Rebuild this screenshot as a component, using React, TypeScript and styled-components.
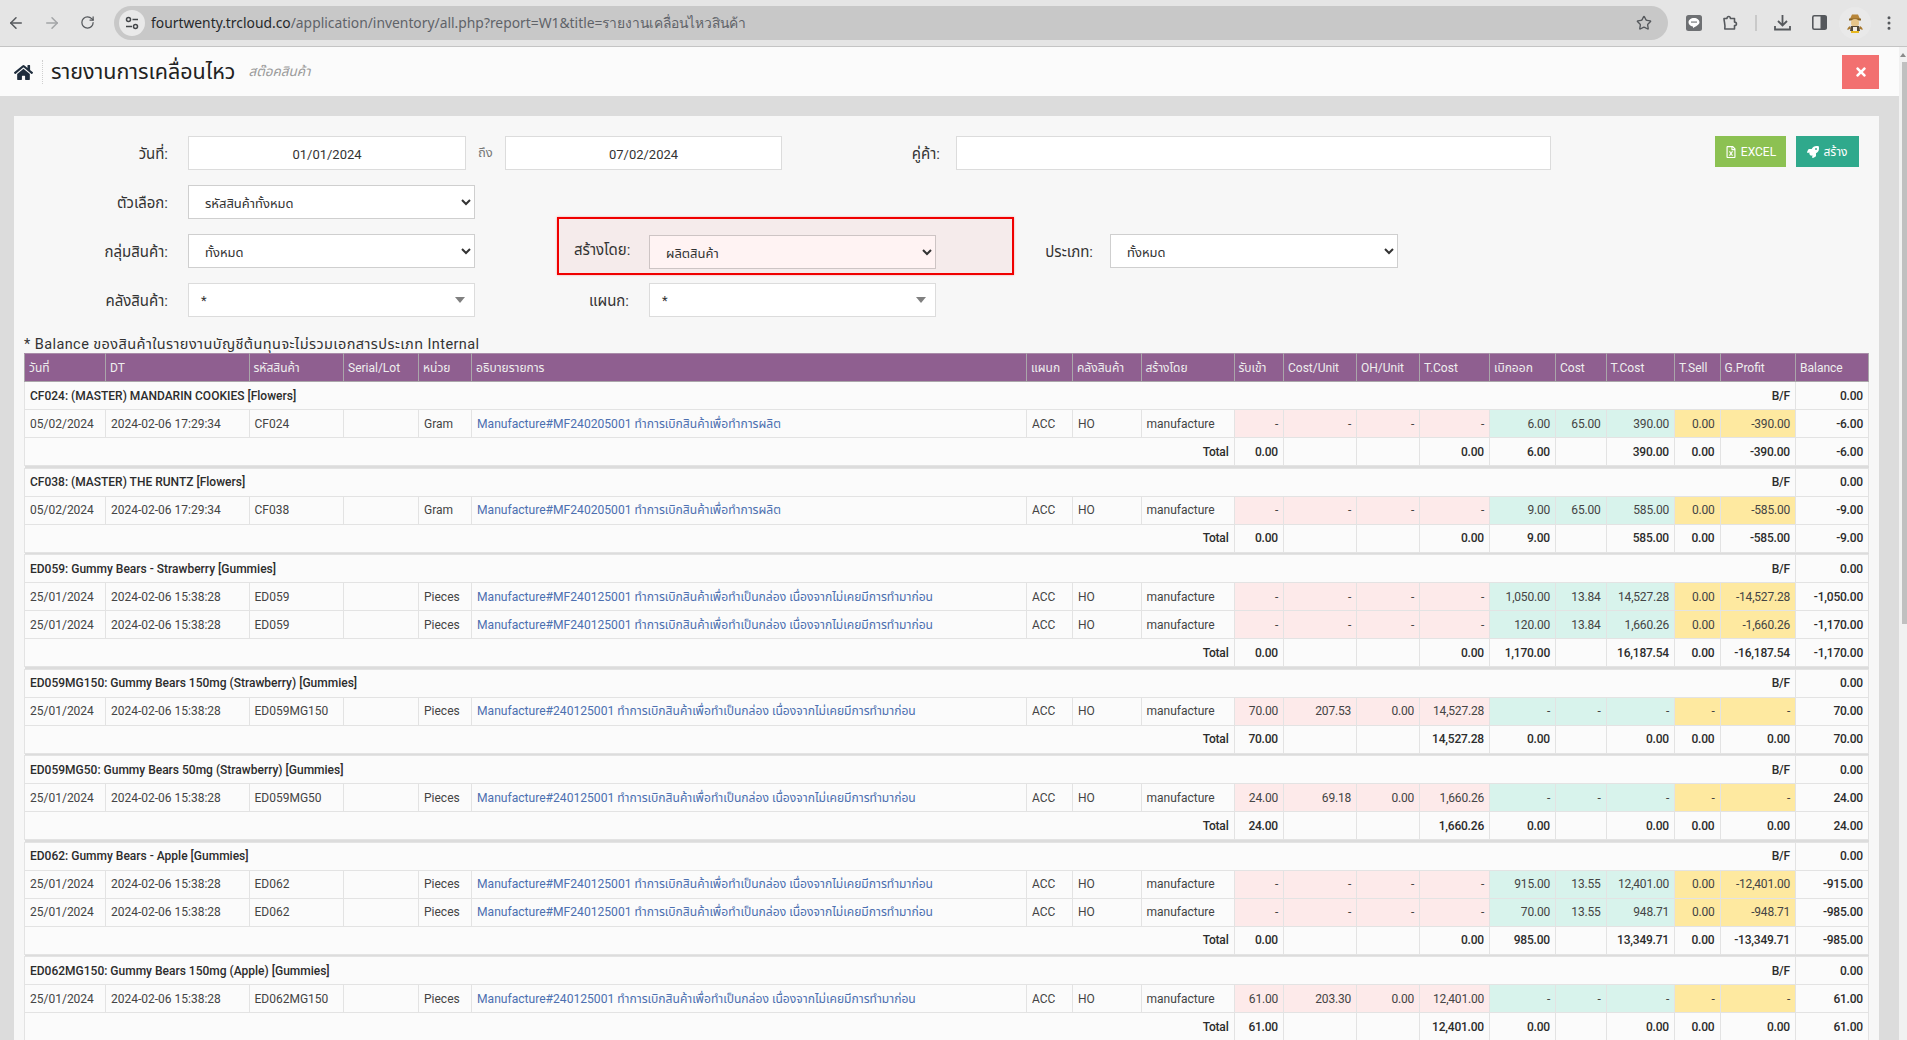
import styled, { createGlobalStyle } from 'styled-components';
import { ArrowLeft, ArrowRight, RotateCw, Star, EllipsisVertical } from 'lucide-react';
import { FaHome, FaTimes, FaRegFileExcel, FaRocket } from 'react-icons/fa';

const FONT = `Roboto, "Noto Sans", "Noto Sans Thai", "Noto Sans CJK SC", sans-serif`;

const GlobalStyle = createGlobalStyle`
	html, body {
		margin: 0;
		height: 100%;
		overflow: hidden;
	}
	body {
		font-family: ${FONT};
		color: #333;
		background: #dcdcdc;
	}
`;

const Shell = styled.div`
	height: 1040px;
	display: flex;
	flex-direction: column;
`;

const Toolbar = styled.div`
	height: 47px;
	box-sizing: border-box;
	flex: none;
	display: flex;
	align-items: center;
	background: #e5e5e5;
	border-bottom: 1px solid #c4c4c4;
	padding-bottom: 1px;
	color: #55585c;
`;

const NavButton = styled.button<{ $dim?: boolean }>`
	width: 34px;
	height: 34px;
	margin-right: 1.5px;
	padding: 0;
	border: 0;
	background: none;
	display: flex;
	align-items: center;
	justify-content: center;
	color: ${({ $dim }) => ($dim ? '#a3a5a7' : '#55585c')};
`;

const NavGroup = styled.div`
	display: flex;
	width: 114px;
	margin-left: -1px;
	margin-right: 1px;
`;

const AddressBar = styled.div`
	width: 1554px;
	height: 34px;
	flex: none;
	border-radius: 17px;
	background: #c8c8c8;
	display: flex;
	align-items: center;
	padding: 0 16px 0 5px;
	box-sizing: border-box;
	font-family: "Noto Sans", sans-serif;
	font-size: 13.85px;
`;

const TuneChip = styled.span`
	width: 26px;
	height: 26px;
	border-radius: 50%;
	background: #e9e9e9;
	display: flex;
	align-items: center;
	justify-content: center;
	margin-right: 6px;
`;

const Url = styled.span`
	flex: 1;
	color: #5f6368;
	white-space: nowrap;
	b {
		font-weight: 400;
		color: #26282b;
	}
`;

const ToolIcons = styled.div`
	display: flex;
	align-items: center;
	flex: 1;
	padding-left: 16px;
`;

const ToolIcon = styled.span<{ $gap?: number }>`
	display: flex;
	width: 20px;
	height: 20px;
	align-items: center;
	justify-content: center;
	margin-right: ${({ $gap }) => $gap ?? 16}px;
`;

const ToolDivider = styled.span`
	width: 2px;
	height: 16px;
	background: #c9c9c9;
	margin-right: 15px;
`;

const AvatarChip = styled.span`
	display: flex;
	width: 32px;
	height: 32px;
	margin: 0 9px 0 -6px;
	border-radius: 50%;
	background: #e9e9e9;
	align-items: center;
	justify-content: center;
`;

const Viewport = styled.div`
	flex: 1;
	min-height: 0;
	display: flex;
`;

const Page = styled.div`
	flex: 1;
	min-width: 0;
	overflow: hidden;
	display: flex;
	flex-direction: column;
`;

const ScrollTrack = styled.div`
	width: 8px;
	flex: none;
	background: #f1f1f1;
	display: flex;
	flex-direction: column;
	align-items: flex-end;
`;

const ScrollArrow = styled.span`
	width: 0;
	height: 0;
	margin: 6px 1px 5px 0;
	border-left: 3px solid transparent;
	border-right: 3px solid transparent;
	border-bottom: 4px solid #8a8a8a;
`;

const ScrollThumb = styled.div`
	width: 5px;
	height: 562px;
	background: #c0c0c0;
`;

const TitleBar = styled.header`
	height: 49px;
	flex: none;
	box-sizing: border-box;
	background: #fbfbfb;
	display: flex;
	align-items: center;
	padding: 1px 20px 0 14px;
`;

const HomeLink = styled.span`
	display: flex;
	width: 20px;
	color: #1f2d3d;
	font-size: 19px;
	padding-right: 8px;
	height: 24px;
	align-items: center;
	border-right: 1px dotted #cfcfcf;
	margin-right: 8px;
`;

const PageTitle = styled.h1`
	margin: 0;
	font-size: 21.5px;
	font-weight: 400;
	color: #222;
`;

const PageSub = styled.em`
	margin-left: 13px;
	font-size: 13.5px;
	color: #9a9a9a;
`;

const CloseButton = styled.button`
	margin-left: auto;
	width: 37px;
	height: 34px;
	border: 0;
	padding: 0;
	background: #f27070;
	color: #fff;
	font-size: 14px;
	display: flex;
	align-items: center;
	justify-content: center;
`;

const Body = styled.main`
	flex: 1;
	min-height: 0;
	padding: 20px 20px 0 14px;
`;

const Panel = styled.section`
	height: 100%;
	box-sizing: border-box;
	background: #f7f7f7;
	padding: 20px 11px 0 10px;
	overflow: hidden;
`;

const FormRow = styled.div`
	display: flex;
	align-items: center;
	height: 34px;
	margin-bottom: 15px;
`;

const Label = styled.label<{ $w: number; $pad?: number }>`
	flex: none;
	width: ${({ $w }) => $w}px;
	box-sizing: border-box;
	padding: 2px ${({ $pad }) => $pad ?? 20}px 0 0;
	text-align: right;
	font-size: 15px;
	color: #333;
`;

const ToWord = styled.span`
	flex: none;
	width: 39px;
	padding-left: 12px;
	box-sizing: border-box;
	font-size: 13px;
	color: #777;
`;

const field = `
	height: 34px;
	box-sizing: border-box;
	flex: none;
	border: 1px solid #dcdcdc;
	border-radius: 0;
	background: #fff;
	font-family: ${FONT};
	font-size: 13px;
	color: #333;
`;

const TextField = styled.input<{ $w: number; $center?: boolean }>`
	${field}
	width: ${({ $w }) => $w}px;
	padding-top: 3px;
	text-align: ${({ $center }) => ($center ? 'center' : 'left')};
`;

const SelectField = styled.select<{ $w: number; $tint?: boolean }>`
	${field}
	width: ${({ $w }) => $w}px;
	padding: 2px 0 0 12px;
	background: ${({ $tint }) => ($tint ? '#fff3f3' : '#fff')};
	border-color: ${({ $tint }) => ($tint ? '#cdc4c4' : '#cfcfcf')};
`;

const Select2 = styled.div<{ $w: number }>`
	${field}
	width: ${({ $w }) => $w}px;
	display: flex;
	align-items: center;
	justify-content: space-between;
	padding: 0 9px 0 12px;
	&::after {
		content: '';
		border-left: 5px solid transparent;
		border-right: 5px solid transparent;
		border-top: 6px solid #808080;
	}
`;

const Spacer = styled.div<{ $w: number }>`
	flex: none;
	width: ${({ $w }) => $w}px;
`;

const Actions = styled.div`
	margin-left: auto;
	margin-right: 9px;
	margin-top: -3px;
	display: flex;
	gap: 10px;
`;

const ActionButton = styled.button<{ $bg: string; $w: number }>`
	width: ${({ $w }) => $w}px;
	height: 31px;
	border: 0;
	padding: 0;
	background: ${({ $bg }) => $bg};
	color: #fff;
	font-family: ${FONT};
	font-size: 12px;
	display: flex;
	align-items: center;
	justify-content: center;
	gap: 4px;
`;

const Highlight = styled.div`
	flex: none;
	width: 457px;
	height: 58px;
	margin: -17px 0 -7px;
	padding: 16px 0 0 0;
	box-sizing: border-box;
	display: flex;
	align-items: flex-start;
	background: #f5ebeb;
	border: 2px solid #f00000;
	box-shadow: 0 0 2px rgba(255, 0, 0, 0.35);
`;

const HighlightLabel = styled.label`
	width: 90px;
	flex: none;
	box-sizing: border-box;
	padding: 4px 15px 0 15px;
	font-size: 15px;
	white-space: nowrap;
`;

const Note = styled.p`
	margin: 19px 0 0;
	height: 17px;
	line-height: 18px;
	font-size: 14.5px;
	letter-spacing: 0.42px;
	color: #333;
`;

const Sheet = styled.table`
	table-layout: fixed;
	width: 1844px;
	border-collapse: collapse;
	font-size: 12px;
	color: #444;
`;

const HeadCell = styled.th`
	height: 28px;
	box-sizing: border-box;
	padding: 0 0 0 4px;
	background: #8f5f90;
	border: 1.5px solid #aaa6aa;
	border-top-color: #a98ca9;
	color: #eee;
	font-weight: 400;
	text-align: left;
	white-space: nowrap;
	overflow: hidden;
`;

const Row = styled.tr`
	height: 28px;
	background: #fbfbfb;
`;

const Cell = styled.td<{ $tone?: 'in' | 'out' | 'sell'; $right?: boolean; $bold?: boolean }>`
	box-sizing: border-box;
	padding: 0 5px;
	border: 1px solid #e3e3e3;
	white-space: nowrap;
	overflow: hidden;
	text-align: ${({ $right }) => ($right ? 'right' : 'left')};
	font-weight: ${({ $bold }) => ($bold ? 500 : 400)};
	color: ${({ $bold }) => ($bold ? '#2c2c2c' : '#444')};
	letter-spacing: ${({ $right }) => ($right ? '-0.2px' : '0')};
	background: ${({ $tone }) =>
		$tone === 'in' ? '#fdeaea' : $tone === 'out' ? '#d8f3ec' : $tone === 'sell' ? '#fee9a0' : 'transparent'};
`;

const DocLink = styled.a`
	color: #4c6fb0;
	font-size: 12.1px;
	text-decoration: none;
`;

const GapRow = styled.tr`
	height: 1.5px;
	td {
		padding: 0;
		background: #dcdcdc;
		height: 1.5px;
		line-height: 0;
		font-size: 0;
		border: 0;
	}
`;

const COLUMNS: [string, number][] = [
	['วันที่', 81],
	['DT', 143.5],
	['รหัสสินค้า', 94.5],
	['Serial/Lot', 75],
	['หน่วย', 53],
	['อธิบายรายการ', 555],
	['แผนก', 46],
	['คลังสินค้า', 68.5],
	['สร้างโดย', 93],
	['รับเข้า', 49.5],
	['Cost/Unit', 73],
	['OH/Unit', 63],
	['T.Cost', 70],
	['เบิกออก', 66],
	['Cost', 50.5],
	['T.Cost', 68.5],
	['T.Sell', 45.5],
	['G.Profit', 75.5],
	['Balance', 73],
];

type Line = {
	date: string;
	dt: string;
	unit: string;
	doc: string;
	inn: string[];
	out: string[];
	balance: string;
};

type Group = {
	code: string;
	title: string;
	lines: Line[];
	total: string[];
};

const DASH4 = ['-', '-', '-', '-'];
const DASH5 = ['-', '-', '-', '-', '-'];
const MIX = 'ทำการเบิกสินค้าเพื่อทำเป็นกล่อง เนื่องจากไม่เคยมีการทำมาก่อน';
const MADE = 'ทำการเบิกสินค้าเพื่อทำการผลิต';
const FEB = '2024-02-06 17:29:34';
const JAN = '2024-02-06 15:38:28';

const GROUPS: Group[] = [
	{
		code: 'CF024',
		title: 'CF024: (MASTER) MANDARIN COOKIES [Flowers]',
		lines: [
			{ date: '05/02/2024', dt: FEB, unit: 'Gram', doc: `Manufacture#MF240205001 ${MADE}`, inn: DASH4, out: ['6.00', '65.00', '390.00', '0.00', '-390.00'], balance: '-6.00' },
		],
		total: ['0.00', '', '', '0.00', '6.00', '', '390.00', '0.00', '-390.00', '-6.00'],
	},
	{
		code: 'CF038',
		title: 'CF038: (MASTER) THE RUNTZ [Flowers]',
		lines: [
			{ date: '05/02/2024', dt: FEB, unit: 'Gram', doc: `Manufacture#MF240205001 ${MADE}`, inn: DASH4, out: ['9.00', '65.00', '585.00', '0.00', '-585.00'], balance: '-9.00' },
		],
		total: ['0.00', '', '', '0.00', '9.00', '', '585.00', '0.00', '-585.00', '-9.00'],
	},
	{
		code: 'ED059',
		title: 'ED059: Gummy Bears - Strawberry [Gummies]',
		lines: [
			{ date: '25/01/2024', dt: JAN, unit: 'Pieces', doc: `Manufacture#MF240125001 ${MIX}`, inn: DASH4, out: ['1,050.00', '13.84', '14,527.28', '0.00', '-14,527.28'], balance: '-1,050.00' },
			{ date: '25/01/2024', dt: JAN, unit: 'Pieces', doc: `Manufacture#MF240125001 ${MIX}`, inn: DASH4, out: ['120.00', '13.84', '1,660.26', '0.00', '-1,660.26'], balance: '-1,170.00' },
		],
		total: ['0.00', '', '', '0.00', '1,170.00', '', '16,187.54', '0.00', '-16,187.54', '-1,170.00'],
	},
	{
		code: 'ED059MG150',
		title: 'ED059MG150: Gummy Bears 150mg (Strawberry) [Gummies]',
		lines: [
			{ date: '25/01/2024', dt: JAN, unit: 'Pieces', doc: `Manufacture#240125001 ${MIX}`, inn: ['70.00', '207.53', '0.00', '14,527.28'], out: DASH5, balance: '70.00' },
		],
		total: ['70.00', '', '', '14,527.28', '0.00', '', '0.00', '0.00', '0.00', '70.00'],
	},
	{
		code: 'ED059MG50',
		title: 'ED059MG50: Gummy Bears 50mg (Strawberry) [Gummies]',
		lines: [
			{ date: '25/01/2024', dt: JAN, unit: 'Pieces', doc: `Manufacture#240125001 ${MIX}`, inn: ['24.00', '69.18', '0.00', '1,660.26'], out: DASH5, balance: '24.00' },
		],
		total: ['24.00', '', '', '1,660.26', '0.00', '', '0.00', '0.00', '0.00', '24.00'],
	},
	{
		code: 'ED062',
		title: 'ED062: Gummy Bears - Apple [Gummies]',
		lines: [
			{ date: '25/01/2024', dt: JAN, unit: 'Pieces', doc: `Manufacture#MF240125001 ${MIX}`, inn: DASH4, out: ['915.00', '13.55', '12,401.00', '0.00', '-12,401.00'], balance: '-915.00' },
			{ date: '25/01/2024', dt: JAN, unit: 'Pieces', doc: `Manufacture#MF240125001 ${MIX}`, inn: DASH4, out: ['70.00', '13.55', '948.71', '0.00', '-948.71'], balance: '-985.00' },
		],
		total: ['0.00', '', '', '0.00', '985.00', '', '13,349.71', '0.00', '-13,349.71', '-985.00'],
	},
	{
		code: 'ED062MG150',
		title: 'ED062MG150: Gummy Bears 150mg (Apple) [Gummies]',
		lines: [
			{ date: '25/01/2024', dt: JAN, unit: 'Pieces', doc: `Manufacture#240125001 ${MIX}`, inn: ['61.00', '203.30', '0.00', '12,401.00'], out: DASH5, balance: '61.00' },
		],
		total: ['61.00', '', '', '12,401.00', '0.00', '', '0.00', '0.00', '0.00', '61.00'],
	},
];

const TuneIcon = () => (
	<svg width="14" height="14" viewBox="0 0 14 14" fill="none" stroke="#44474a" strokeWidth="1.5">
		<circle cx="3.5" cy="3.5" r="2" />
		<path d="M7.5 3.5H13M1 10.5h6" />
		<circle cx="10.5" cy="10.5" r="2" />
	</svg>
);

const LineIcon = () => (
	<svg width="16" height="16" viewBox="0 0 16 16">
		<rect width="16" height="16" rx="2.5" fill="#6e7073" />
		<path d="M8 3c-3.1 0-5.5 1.9-5.5 4.3 0 2.1 1.8 3.8 4.3 4.2.4.1.3.6.2 1.2 0 .3.3.3.6.1 1.7-1.100 5.900-3 5.900-5.500C13.500 4.900 11.100 3 8 3z" fill="#fff" />
		<rect x="5" y="6.300" width="6" height="1.600" fill="#9b9d9f" />
	</svg>
);

const PuzzleIcon = () => (
	<svg width="17" height="17" viewBox="0 0 17 17" fill="none" stroke="#55585c" strokeWidth="1.600" strokeLinejoin="round">
		<path d="M2 4.500h3c-.2-2.600 3.600-2.600 3.400 0h4.100v3.600c2.600-.2 2.600 3.800 0 3.500v3.400H2.800c.900-2.900-.800-7.500-.800-10.500z" />
	</svg>
);

const DownloadIcon = () => (
	<svg width="17" height="17" viewBox="0 0 17 17" fill="none" stroke="#55585c" strokeWidth="1.800">
		<path d="M8.500 1v10M4 7l4.500 4.500L13 7M1 12v3.500h15V12" />
	</svg>
);

const SideIcon = () => (
	<svg width="15" height="15" viewBox="0 0 15 15">
		<rect x=".8" y=".8" width="13.400" height="13.400" rx="1.500" fill="none" stroke="#55585c" strokeWidth="1.600" />
		<rect x="8.500" y="1" width="6" height="13" fill="#55585c" />
	</svg>
);

const AvatarIcon = () => (
	<svg width="20" height="22" viewBox="0 0 20 22">
		<path d="M5 7l2-4.500h6L15 7z" fill="#b8863a" />
		<rect x="4" y="6.500" width="12" height="2" fill="#8a6426" />
		<circle cx="10" cy="11" r="4" fill="#e6c58a" />
		<path d="M5 14c-2 1-3 3-2.500 4L6 16.500zM15 14c2 1 3 3 2.500 4L14 16.500z" fill="#a8792e" />
		<path d="M6 14h8l1 5H5z" fill="#53493a" />
		<path d="M8 15h4v4H8z" fill="#f0ede6" />
		<path d="M6 19h8v2H6z" fill="#e8b820" />
	</svg>
);

export default function App() {
	return (
		<Shell>
			<GlobalStyle />
			<Toolbar>
				<NavGroup>
					<NavButton><ArrowLeft size={18} /></NavButton>
					<NavButton $dim><ArrowRight size={18} /></NavButton>
					<NavButton><RotateCw size={15} /></NavButton>
				</NavGroup>
				<AddressBar>
					<TuneChip><TuneIcon /></TuneChip>
					<Url>
						<b>fourtwenty.trcloud.co</b>/application/inventory/all.php?report=W1&amp;title=รายงานเคลื่อนไหวสินค้า
					</Url>
					<Star size={16} />
				</AddressBar>
				<ToolIcons>
					<ToolIcon><LineIcon /></ToolIcon>
					<ToolIcon $gap={15}><PuzzleIcon /></ToolIcon>
					<ToolDivider />
					<ToolIcon $gap={17}><DownloadIcon /></ToolIcon>
					<ToolIcon><SideIcon /></ToolIcon>
					<AvatarChip><AvatarIcon /></AvatarChip>
					<EllipsisVertical size={18} />
				</ToolIcons>
			</Toolbar>
			<Viewport>
				<Page>
					<TitleBar>
						<HomeLink><FaHome /></HomeLink>
						<PageTitle>รายงานการเคลื่อนไหว</PageTitle>
						<PageSub>สต๊อคสินค้า</PageSub>
						<CloseButton><FaTimes /></CloseButton>
					</TitleBar>
					<Body>
						<Panel>
							<FormRow>
								<Label $w={164}>วันที่:</Label>
								<TextField $w={278} $center defaultValue="01/01/2024" />
								<ToWord>ถึง</ToWord>
								<TextField $w={277} $center defaultValue="07/02/2024" />
								<Label $w={174} $pad={16}>คู่ค้า:</Label>
								<TextField $w={595} />
								<Actions>
									<ActionButton $bg="#8cc152" $w={71}><FaRegFileExcel />EXCEL</ActionButton>
									<ActionButton $bg="#2fa98c" $w={63}><FaRocket />สร้าง</ActionButton>
								</Actions>
							</FormRow>
							<FormRow>
								<Label $w={164}>ตัวเลือก:</Label>
								<SelectField $w={287} defaultValue="all"><option value="all">รหัสสินค้าทั้งหมด</option></SelectField>
							</FormRow>
							<FormRow>
								<Label $w={164}>กลุ่มสินค้า:</Label>
								<SelectField $w={287} defaultValue="all"><option value="all">ทั้งหมด</option></SelectField>
								<Spacer $w={82} />
								<Highlight>
									<HighlightLabel>สร้างโดย:</HighlightLabel>
									<SelectField $w={287} $tint defaultValue="mf"><option value="mf">ผลิตสินค้า</option></SelectField>
								</Highlight>
								<Label $w={96} $pad={17}>ประเภท:</Label>
								<SelectField $w={288} defaultValue="all"><option value="all">ทั้งหมด</option></SelectField>
							</FormRow>
							<FormRow>
								<Label $w={164}>คลังสินค้า:</Label>
								<Select2 $w={287}>*</Select2>
								<Spacer $w={82} />
								<Label $w={92}>แผนก:</Label>
								<Select2 $w={287}>*</Select2>
							</FormRow>
							<Note>* Balance ของสินค้าในรายงานบัญชีต้นทุนจะไม่รวมเอกสารประเภท Internal</Note>
							<Sheet>
								<colgroup>
									{COLUMNS.map(([name, width], i) => (
										<col key={`${name}${i}`} style={{ width }} />
									))}
								</colgroup>
								<thead>
									<tr>
										{COLUMNS.map(([name], i) => (
											<HeadCell key={`${name}${i}`}>{name}</HeadCell>
										))}
									</tr>
								</thead>
								{GROUPS.map((group, g) => (
									<tbody key={group.code}>
										<Row>
											<Cell colSpan={16} $bold style={{ borderRight: 0 }}>{group.title}</Cell>
											<Cell colSpan={2} $bold $right style={{ borderLeft: 0 }}>B/F</Cell>
											<Cell $bold $right>0.00</Cell>
										</Row>
										{group.lines.map((line, i) => (
											<Row key={i}>
												<Cell>{line.date}</Cell>
												<Cell>{line.dt}</Cell>
												<Cell>{group.code}</Cell>
												<Cell />
												<Cell>{line.unit}</Cell>
												<Cell><DocLink>{line.doc}</DocLink></Cell>
												<Cell>ACC</Cell>
												<Cell>HO</Cell>
												<Cell>manufacture</Cell>
												{line.inn.map((v, n) => <Cell key={n} $tone="in" $right>{v}</Cell>)}
												{line.out.slice(0, 3).map((v, n) => <Cell key={n} $tone="out" $right>{v}</Cell>)}
												{line.out.slice(3).map((v, n) => <Cell key={n} $tone="sell" $right>{v}</Cell>)}
												<Cell $bold $right>{line.balance}</Cell>
											</Row>
										))}
										<Row>
											<Cell colSpan={9} $bold $right>Total</Cell>
											{group.total.map((v, n) => <Cell key={n} $bold $right>{v}</Cell>)}
										</Row>
										{g < GROUPS.length - 1 && (
											<GapRow><td colSpan={19} /></GapRow>
										)}
									</tbody>
								))}
							</Sheet>
						</Panel>
					</Body>
				</Page>
				<ScrollTrack>
					<ScrollArrow />
					<ScrollThumb />
				</ScrollTrack>
			</Viewport>
		</Shell>
	);
}
